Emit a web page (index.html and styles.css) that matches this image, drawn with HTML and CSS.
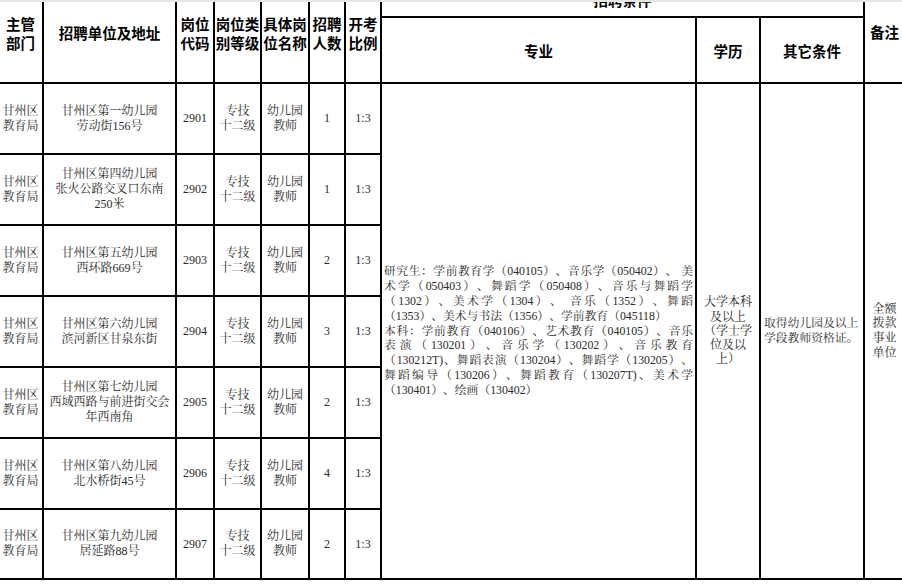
FILE: index.html
```html
<!DOCTYPE html>
<html lang="zh-CN">
<head>
<meta charset="utf-8">
<title>招聘岗位表</title>
<link rel="stylesheet" href="styles.css">
</head>
<body>
<div class="edge"></div>
<div class="sheet">
  <div class="cell head rows2">主管<br>部门</div>
  <div class="cell head rows2">招聘单位及地址</div>
  <div class="cell head rows2">岗位<br>代码</div>
  <div class="cell head rows2">岗位类<br>别等级</div>
  <div class="cell head rows2">具体岗<br>位名称</div>
  <div class="cell head rows2">招聘<br>人数</div>
  <div class="cell head rows2">开考<br>比例</div>
  <div class="cell head cols3">招聘条件</div>
  <div class="cell head rows2 note-head">备注</div>
  <div class="cell head">专业</div>
  <div class="cell head">学历</div>
  <div class="cell head">其它条件</div>

  <div class="cell dept">甘州区教育局</div>
  <div class="cell unit"><div>甘州区第一幼儿园</div><div>劳动街156号</div></div>
  <div class="cell">2901</div>
  <div class="cell">专技<br>十二级</div>
  <div class="cell post">幼儿园教师</div>
  <div class="cell">1</div>
  <div class="cell">1:3</div>
  <div class="cell rows7 major">
    <div class="text">
      <span class="ln">研究生：学前教育学（040105）、音乐学（050402）、 美</span>
      <span class="ln">术学（050403）、舞蹈学（050408）、音乐与舞蹈学</span>
      <span class="ln">（1302）、美术学（1304）、 音乐（1352）、舞蹈</span>
      <span class="ln last">（1353）、美术与书法（1356）、学前教育（045118）</span>
      <span class="ln">本科：学前教育（040106）、艺术教育（040105）、音乐</span>
      <span class="ln">表演（130201）、音乐学（130202）、音乐教育</span>
      <span class="ln">（130212T)、舞蹈表演（130204）、舞蹈学（130205）、</span>
      <span class="ln">舞蹈编导（130206）、舞蹈教育（130207T)、美术学</span>
      <span class="ln last">（130401）、绘画（130402）</span>
    </div>
  </div>
  <div class="cell rows7 edu">大学本科及以上（学士学位及以上）</div>
  <div class="cell rows7 other">取得幼儿园及以上学段教师资格证。</div>
  <div class="cell rows7 note">全额拨款事业单位</div>

  <div class="cell dept">甘州区教育局</div>
  <div class="cell unit"><div>甘州区第四幼儿园</div><div>张火公路交叉口东南250米</div></div>
  <div class="cell">2902</div>
  <div class="cell">专技<br>十二级</div>
  <div class="cell post">幼儿园教师</div>
  <div class="cell">1</div>
  <div class="cell">1:3</div>

  <div class="cell dept">甘州区教育局</div>
  <div class="cell unit"><div>甘州区第五幼儿园</div><div>西环路669号</div></div>
  <div class="cell">2903</div>
  <div class="cell">专技<br>十二级</div>
  <div class="cell post">幼儿园教师</div>
  <div class="cell">2</div>
  <div class="cell">1:3</div>

  <div class="cell dept">甘州区教育局</div>
  <div class="cell unit"><div>甘州区第六幼儿园</div><div>滨河新区甘泉东街</div></div>
  <div class="cell">2904</div>
  <div class="cell">专技<br>十二级</div>
  <div class="cell post">幼儿园教师</div>
  <div class="cell">3</div>
  <div class="cell">1:3</div>

  <div class="cell dept">甘州区教育局</div>
  <div class="cell unit"><div>甘州区第七幼儿园</div><div>西域西路与前进街交会年西南角</div></div>
  <div class="cell">2905</div>
  <div class="cell">专技<br>十二级</div>
  <div class="cell post">幼儿园教师</div>
  <div class="cell">2</div>
  <div class="cell">1:3</div>

  <div class="cell dept">甘州区教育局</div>
  <div class="cell unit"><div>甘州区第八幼儿园</div><div>北水桥街45号</div></div>
  <div class="cell">2906</div>
  <div class="cell">专技<br>十二级</div>
  <div class="cell post">幼儿园教师</div>
  <div class="cell">4</div>
  <div class="cell">1:3</div>

  <div class="cell dept">甘州区教育局</div>
  <div class="cell unit"><div>甘州区第九幼儿园</div><div>居延路88号</div></div>
  <div class="cell">2907</div>
  <div class="cell">专技<br>十二级</div>
  <div class="cell post">幼儿园教师</div>
  <div class="cell">2</div>
  <div class="cell">1:3</div>
</div>
</body>
</html>
```

FILE: styles.css
```css
html, body {
  margin: 0;
  padding: 0;
  background: #fff;
  overflow: hidden;
}

body {
  font-family: "Liberation Serif", "Noto Serif CJK SC", "Noto Sans CJK SC", serif;
  font-size: 12px;
  line-height: 15px;
  color: #2a2a2a;
  text-spacing-trim: space-all;
}

.edge {
  position: fixed;
  top: 0;
  left: 0;
  right: 0;
  height: 2px;
  background: #e6e6e6;
  z-index: 2;
}

.sheet {
  display: grid;
  grid-template-columns: 43px 131px 36px 45px 46px 34px 34px 313px 62px 102px 39px;
  grid-template-rows: 33px 64px repeat(6, 69px) 68px;
  gap: 2px;
  padding: 2px;
  background: #000;
  width: max-content;
  margin: -19px 0 0 -3px;
}

.cell {
  background: #fff;
  display: flex;
  flex-direction: column;
  align-items: center;
  justify-content: center;
  text-align: center;
  padding: 0 2px;
  min-width: 0;
}

.head {
  font-family: "Noto Sans CJK SC", "Liberation Sans", sans-serif;
  font-weight: 700;
  font-size: 14.5px;
  line-height: 19px;
  color: #000;
  padding: 0;
  white-space: nowrap;
}

.rows2 { grid-row: span 2; }
.cols3 { grid-column: span 3; }
.rows7 { grid-row: span 7; }

.note-head { padding-bottom: 2px; }

.unit {
  padding: 0 4px;
}

.major {
  align-items: stretch;
  padding: 0 2px;
  font-size: 11.8px;
  line-height: 14.8px;
}

.major .text {
  text-align: left;
}

.major .ln {
  display: block;
  text-align: justify;
  text-align-last: justify;
  white-space: nowrap;
}

.major .ln.last {
  text-align-last: left;
}

.edu {
  padding: 0 5px;
  font-size: 12px;
  line-height: 14.3px;
}

.other {
  align-items: flex-start;
  text-align: left;
  padding: 0 2px 0 3px;
  font-size: 11.8px;
  line-height: 15px;
}

.note {
  padding: 0 5px;
  font-size: 12px;
  line-height: 14.7px;
}
```
